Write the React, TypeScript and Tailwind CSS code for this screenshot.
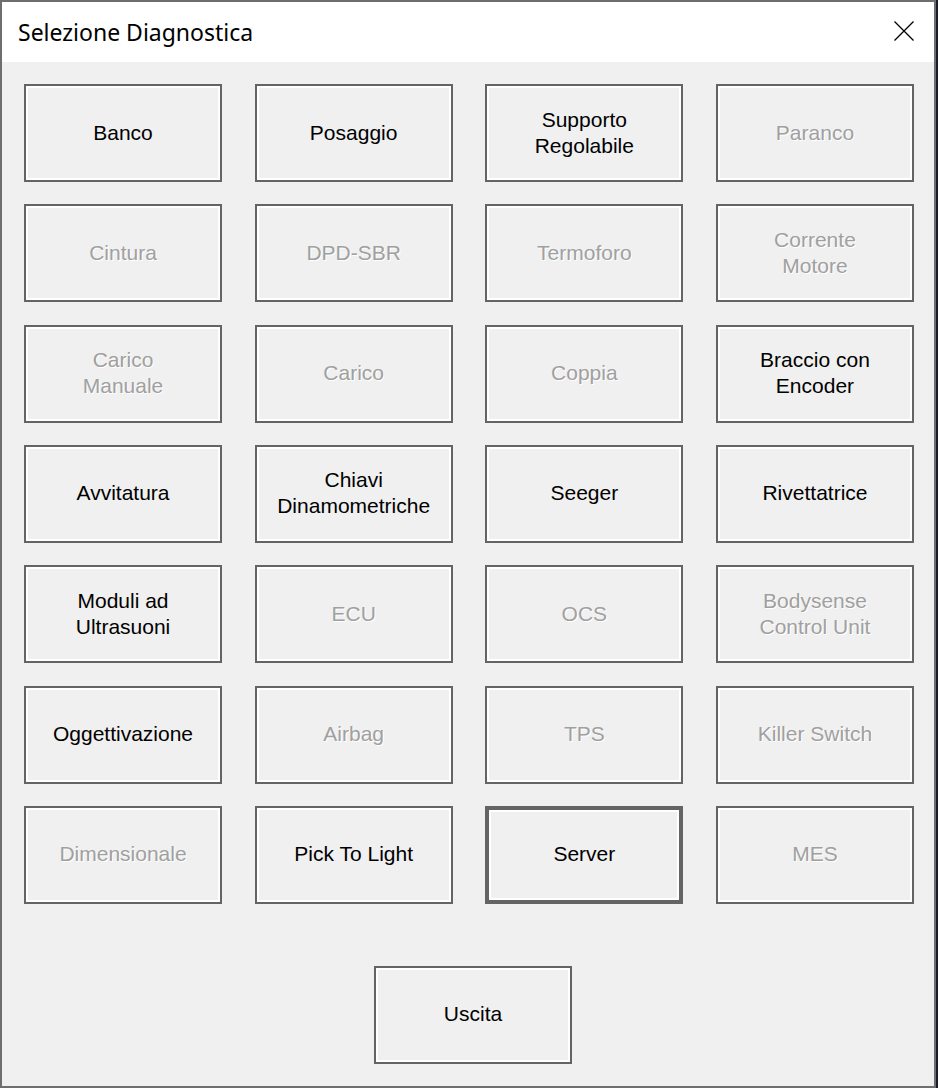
const buttons: { label: string[]; enabled: boolean; focused?: boolean }[] = [
  { label: ['Banco'], enabled: true },
  { label: ['Posaggio'], enabled: true },
  { label: ['Supporto', 'Regolabile'], enabled: true },
  { label: ['Paranco'], enabled: false },
  { label: ['Cintura'], enabled: false },
  { label: ['DPD-SBR'], enabled: false },
  { label: ['Termoforo'], enabled: false },
  { label: ['Corrente', 'Motore'], enabled: false },
  { label: ['Carico', 'Manuale'], enabled: false },
  { label: ['Carico'], enabled: false },
  { label: ['Coppia'], enabled: false },
  { label: ['Braccio con', 'Encoder'], enabled: true },
  { label: ['Avvitatura'], enabled: true },
  { label: ['Chiavi', 'Dinamometriche'], enabled: true },
  { label: ['Seeger'], enabled: true },
  { label: ['Rivettatrice'], enabled: true },
  { label: ['Moduli ad', 'Ultrasuoni'], enabled: true },
  { label: ['ECU'], enabled: false },
  { label: ['OCS'], enabled: false },
  { label: ['Bodysense', 'Control Unit'], enabled: false },
  { label: ['Oggettivazione'], enabled: true },
  { label: ['Airbag'], enabled: false },
  { label: ['TPS'], enabled: false },
  { label: ['Killer Switch'], enabled: false },
  { label: ['Dimensionale'], enabled: false },
  { label: ['Pick To Light'], enabled: true },
  { label: ['Server'], enabled: true, focused: true },
  { label: ['MES'], enabled: false },
];

const WinButton = ({ label, enabled, focused }: { label: string[]; enabled: boolean; focused?: boolean }): JSX.Element => {
  return (
    <button
      type="button"
      className={
        'w-[198px] h-[98px] flex flex-col items-center justify-center bg-[#f0f0f0] border-[#646464] shadow-[inset_0_0_0_2px_#ffffff] text-[21px] leading-[26px] pb-[1px] ' +
        (focused ? 'border-4 ' : 'border-2 ') +
        (enabled ? 'text-black' : 'text-[#a0a0a0] [text-shadow:1px_1px_0_#ffffff]')
      }
      style={{ fontFamily: '"Liberation Sans", Arial, sans-serif' }}
    >
      {label.map((l) => (
        <span key={l}>{l}</span>
      ))}
    </button>
  );
};

const App = (): JSX.Element => {
  return (
    <div className="w-[938px] h-[1088px] bg-[#1c1c28]">
      <div className="w-[936px] h-[1088px] border-2 border-[#6e6e6e] flex flex-col bg-[#f0f0f0]">
        <div className="h-[60px] bg-white flex items-center justify-between pl-[16px] pr-[20px]">
          <span className="text-[23px] text-black" style={{ fontFamily: '"Noto Sans", "Open Sans", sans-serif' }}>
            Selezione Diagnostica
          </span>
          <svg width="20" height="20" viewBox="0 0 20 20" className="mb-[3px]">
            <path d="M0.5 0.5 L19.5 19.5 M19.5 0.5 L0.5 19.5" stroke="#000" strokeWidth="1.3" fill="none" />
          </svg>
        </div>
        <div className="flex flex-col pt-[22px] pl-[22px]">
          <div className="grid grid-cols-[repeat(4,198px)] gap-x-[32.67px] gap-y-[22.33px]">
            {buttons.map((b, i) => (
              <WinButton key={i} {...b} />
            ))}
          </div>
          <div className="mt-[62px] ml-[350px]">
            <WinButton label={['Uscita']} enabled={true} />
          </div>
        </div>
      </div>
    </div>
  );
};

export default App;
